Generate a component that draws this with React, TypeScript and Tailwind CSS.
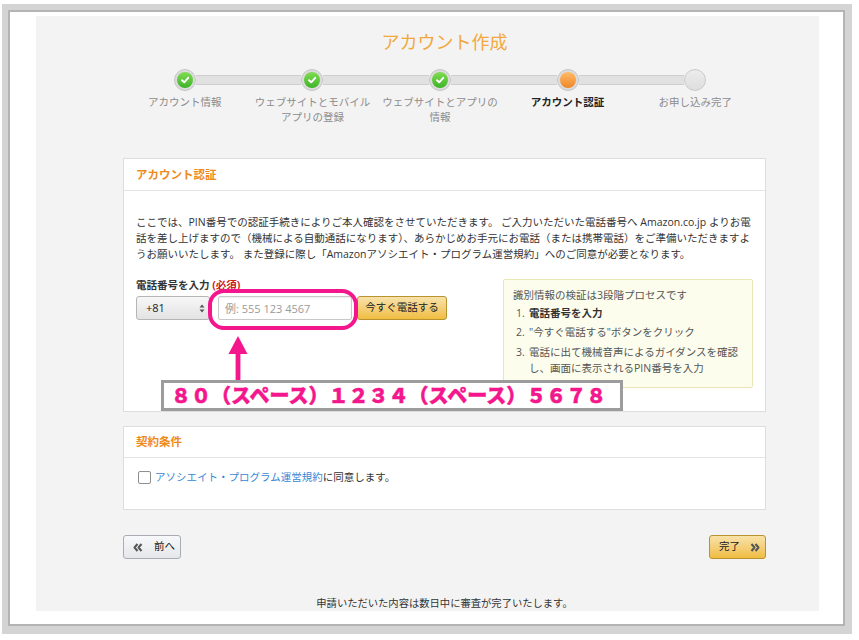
import type { ReactNode } from 'react';

type StepState = 'done' | 'current' | 'todo';

const steps: { label: string[]; state: StepState }[] = [
  { label: ['アカウント情報'], state: 'done' },
  { label: ['ウェブサイトとモバイル', 'アプリの登録'], state: 'done' },
  { label: ['ウェブサイトとアプリの', '情報'], state: 'done' },
  { label: ['アカウント認証'], state: 'current' },
  { label: ['お申し込み完了'], state: 'todo' },
];

const StepDot = ({ state }: { state: StepState }) => {
  if (state === 'todo') {
    return (
      <div className="h-[22px] w-[22px] shrink-0 rounded-full border border-[#cbcbcb] bg-gradient-to-b from-[#ececec] to-[#dedede]" />
    );
  }
  return (
    <div className="flex h-[22px] w-[22px] shrink-0 items-center justify-center rounded-full border border-[#c6c6c6] bg-[#dcdcdc]">
      <div
        className={
          state === 'done'
            ? 'flex h-[16px] w-[16px] items-center justify-center rounded-full bg-gradient-to-b from-[#7fdc52] to-[#3cb326]'
            : 'h-[16px] w-[16px] rounded-full bg-gradient-to-b from-[#ffbb66] to-[#ee8624]'
        }>
        {state === 'done' && (
          <svg width="10" height="10" viewBox="0 0 10 10">
            <path
              d="M2 5.2 L4.2 7.3 L8.2 2.8"
              fill="none"
              stroke="#fff"
              strokeWidth="1.9"
              strokeLinecap="round"
              strokeLinejoin="round"
            />
          </svg>
        )}
      </div>
    </div>
  );
};

const Stepper = () => (
  <div className="ml-[-2px] mt-[14px] grid w-[638px] grid-cols-5">
    {steps.map((step, i) => (
      <div key={i} className="flex flex-col items-center">
        <div className="flex w-full items-center">
          <div
            className={
              i === 0
                ? 'h-[10px] flex-1'
                : 'h-[10px] flex-1 border-y border-[#cdcdcd] bg-[#e1e1e1]'
            }
          />
          <StepDot state={step.state} />
          <div
            className={
              i === steps.length - 1
                ? 'h-[10px] flex-1'
                : 'h-[10px] flex-1 border-y border-[#cdcdcd] bg-[#e1e1e1]'
            }
          />
        </div>
        <div
          className={
            step.state === 'current'
              ? 'mt-[4px] text-center text-[10.5px] leading-[15px] font-bold text-[#222]'
              : 'mt-[4px] text-center text-[10.5px] leading-[15px] text-[#8c8c8c]'
          }>
          {step.label.map(line => (
            <div key={line} className="whitespace-nowrap">
              {line}
            </div>
          ))}
        </div>
      </div>
    ))}
  </div>
);

const DoubleChevron = ({ dir }: { dir: 'left' | 'right' }) => (
  <svg width="10" height="9" viewBox="0 0 10 9">
    <path
      d={
        dir === 'left'
          ? 'M4.5 1 L1.5 4.5 L4.5 8 M8.5 1 L5.5 4.5 L8.5 8'
          : 'M1.5 1 L4.5 4.5 L1.5 8 M5.5 1 L8.5 4.5 L5.5 8'
      }
      fill="none"
      stroke="#555"
      strokeWidth="2"
      strokeLinejoin="round"
    />
  </svg>
);

const PanelHeader = ({ children, h }: { children: ReactNode; h: string }) => (
  <div
    className={`flex items-center border-b border-[#e4e4e4] px-[12px] text-[11.5px] font-bold text-[#ee8a1c] ${h}`}>
    {children}
  </div>
);

export default function App() {
  return (
    <div className="min-h-[640px] bg-white font-['Open_Sans','Noto_Sans_CJK_JP',sans-serif] pt-[4px] pl-[2px]">
      <div className="h-[630px] w-[850px] bg-[#d4d4d4] pt-[6px] pl-[6px] pr-[7px] pb-[8px]">
        <div className="h-full w-full border-2 border-[#b4b4b4] bg-white pt-[4px] pl-[26px] pr-[24px] pb-[13px]">
          <div className="h-full w-full overflow-hidden bg-[#f3f3f3]">
            <div className="ml-[87px] w-[643px] pt-[13px]">
              <h1 className="text-center text-[18px] leading-[26px] font-normal text-[#f2a83c]">
                アカウント作成
              </h1>

              <Stepper />

              {/* account verification */}
              <div className="relative mt-[33px] border border-[#dddddd] bg-white">
                <PanelHeader h="h-[32px]">アカウント認証</PanelHeader>
                <div className="px-[12px] pt-[23px] pb-[23px]">
                  <div className="text-[10.5px] leading-[16px] text-[#333]">
                    <div className="whitespace-nowrap">
                      ここでは、PIN番号での認証手続きによりご本人確認をさせていただきます。 ご入力いただいた電話番号へ Amazon.co.jp よりお電
                    </div>
                    <div className="whitespace-nowrap">
                      話を差し上げますので（機械による自動通話になります）、あらかじめお手元にお電話（または携帯電話）をご準備いただきますよ
                    </div>
                    <div className="whitespace-nowrap">
                      うお願いいたします。 また登録に際し「Amazonアソシエイト・プログラム運営規約」へのご同意が必要となります。
                    </div>
                  </div>

                  <div className="mt-[15px] flex justify-between">
                    <div>
                      <div className="text-[10.5px] leading-[16px] font-bold text-[#333]">
                        電話番号を入力 <span className="text-[#cc1c1c]">(必須)</span>
                      </div>
                      <div className="mt-[3px] flex items-center">
                        <div className="flex h-[24px] w-[74px] items-center justify-between rounded-[3px] border border-[#b5b5b5] bg-gradient-to-b from-[#f7f7f7] to-[#e3e3e3] pl-[9px] pr-[4px] text-[11px] text-[#222]">
                          <span>+81</span>
                          <svg width="6" height="9" viewBox="0 0 6 9">
                            <path d="M3 0.5 L5.5 3.5 L0.5 3.5 Z M3 8.5 L5.5 5.5 L0.5 5.5 Z" fill="#555" />
                          </svg>
                        </div>
                        <input
                          readOnly
                          placeholder="例: 555 123 4567"
                          className="ml-[8px] h-[24px] w-[134px] rounded-[2px] border border-[#c9c9c9] bg-white px-[6px] text-[11px] outline-none placeholder:text-[#9a9a9a] shadow-[inset_0_1px_2px_rgba(0,0,0,0.08)]"
                        />
                        <button className="ml-[5px] h-[24px] w-[90px] rounded-[3px] border border-[#b8932f] bg-gradient-to-b from-[#f8e2a8] to-[#efbd3d] text-[10.5px] text-[#222]">
                          今すぐ電話する
                        </button>
                      </div>
                    </div>

                    <div className="mt-[2px] w-[250px] rounded-[2px] border border-[#ebe6b8] bg-[#fdfdee] px-[9px] pt-[7px] pb-[11px] text-[10.5px] leading-[16px] text-[#555]">
                      <div>識別情報の検証は3段階プロセスです</div>
                      <div className="mt-[2px] flex font-bold text-[#333]">
                        <span className="w-[16px] pl-[3px] font-normal text-[#555]">1.</span>
                        <span>電話番号を入力</span>
                      </div>
                      <div className="mt-[3px] flex">
                        <span className="w-[16px] pl-[3px]">2.</span>
                        <span>"今すぐ電話する"ボタンをクリック</span>
                      </div>
                      <div className="mt-[4px] flex">
                        <span className="w-[16px] shrink-0 pl-[3px]">3.</span>
                        <span>
                          電話に出て機械音声によるガイダンスを確認
                          <br />
                          し、画面に表示されるPIN番号を入力
                        </span>
                      </div>
                    </div>
                  </div>
                </div>

                {/* annotation overlays */}
                <div className="absolute left-[84px] top-[130px] h-[41px] w-[150px] rounded-[16px] border-[4px] border-[#f4168c]" />
                <svg
                  className="absolute left-[104px] top-[177px]"
                  width="20"
                  height="44"
                  viewBox="0 0 20 44">
                  <polygon points="10,0 19.5,18 0.5,18" fill="#f4168c" />
                  <rect x="7.6" y="17" width="4.8" height="27" fill="#f4168c" />
                </svg>
                <div className="absolute left-[37px] top-[221px] flex h-[31px] w-[462px] items-center border-[3px] border-[#9c9c9c] bg-white pl-[7px] text-[20px] leading-none font-black whitespace-nowrap text-[#f4168c] [-webkit-text-stroke:0.5px_#f4168c]">
                  ８０（スペース）１２３４（スペース）５６７８
                </div>
              </div>

              {/* terms */}
              <div className="mt-[14px] border border-[#dddddd] bg-white">
                <PanelHeader h="h-[31px]">契約条件</PanelHeader>
                <div className="flex items-center px-[14px] pt-[11px] pb-[24px] text-[10.5px] leading-[16px] text-[#333]">
                  <span className="h-[13px] w-[13px] shrink-0 rounded-[2px] border border-[#8f8f8f] bg-white" />
                  <span className="ml-[4px]">
                    <span className="text-[#3a87d4]">アソシエイト・プログラム運営規約</span>
                    に同意します。
                  </span>
                </div>
              </div>

              <div className="mt-[25px] flex justify-between">
                <button className="flex h-[24px] w-[58px] items-center gap-[11px] rounded-[3px] border border-[#a9adb3] bg-gradient-to-b from-[#f7f8fa] to-[#e5e7ea] pl-[9px] text-[10.5px] text-[#222]">
                  <DoubleChevron dir="left" />
                  <span>前へ</span>
                </button>
                <button className="flex h-[24px] w-[57px] items-center gap-[10px] rounded-[3px] border border-[#b8932f] bg-gradient-to-b from-[#f8e2a8] to-[#efbd3d] pl-[9px] text-[10.5px] text-[#222]">
                  <span>完了</span>
                  <DoubleChevron dir="right" />
                </button>
              </div>

              <div className="mt-[37px] text-center text-[10.3px] leading-[14px] text-[#333]">
                申請いただいた内容は数日中に審査が完了いたします。
              </div>
            </div>
          </div>
        </div>
      </div>
    </div>
  );
}
